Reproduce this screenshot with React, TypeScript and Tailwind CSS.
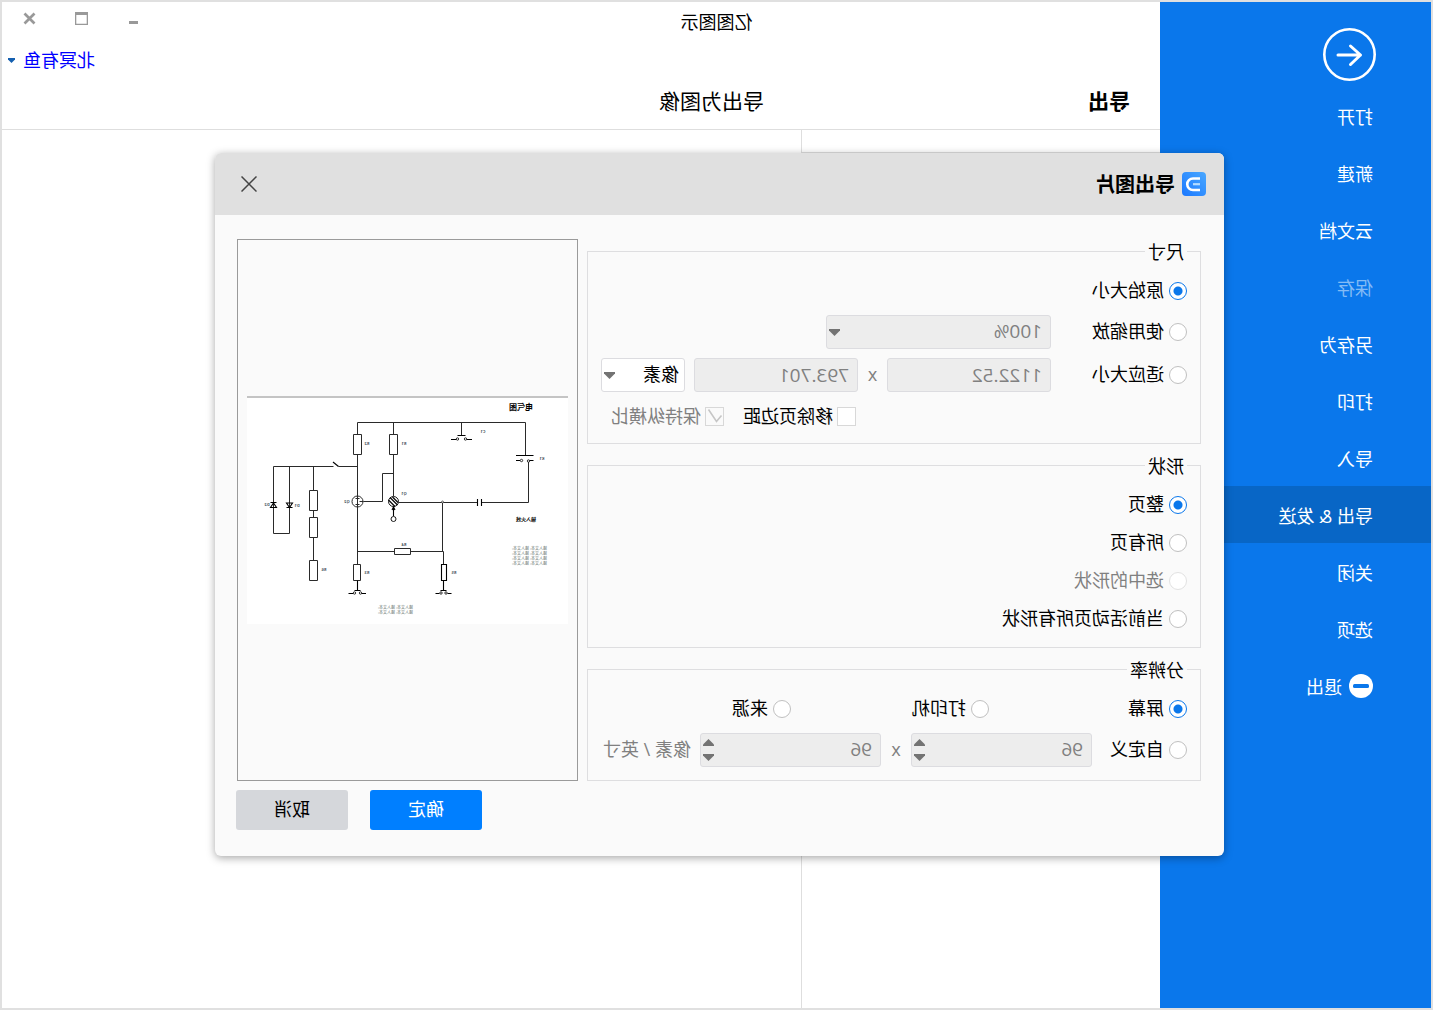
import React, { useState } from "react";
import type { ReactNode } from "react";

const NAV: { label: string; disabled?: boolean; active?: boolean }[] = [
  { label: "打开" },
  { label: "新建" },
  { label: "云文档" },
  { label: "保存", disabled: true },
  { label: "另存为" },
  { label: "打印" },
  { label: "导入" },
  { label: "导出 & 发送", active: true },
  { label: "关闭" },
  { label: "选项" },
];

function Sidebar() {
  return (
    <aside className="w-[271px] shrink-0 bg-[#0a77eb] pt-[26px] text-white">
      <button type="button" aria-label="返回" className="ml-[55px] block">
        <svg width="53" height="53" viewBox="0 0 53 53" fill="none" stroke="#fff">
          <circle cx="26.5" cy="26.5" r="25.2" strokeWidth="2.6" />
          <path d="M38 27H15.500M25.500 18L15.500 27l10 9.500" strokeWidth="3" strokeLinecap="round" strokeLinejoin="round" />
        </svg>
      </button>
      <nav className="mt-1.5">
        {NAV.map((n) => (
          <a
            key={n.label}
            href="#"
            className={
              "flex h-[57px] items-center pt-0.5 pl-[58px] leading-6 " +
              (n.active ? "bg-[#0866c6] " : "") +
              (n.disabled ? "text-[#84bbf5]" : "")
            }
          >
            {n.label}
          </a>
        ))}
        <a href="#" className="flex h-[57px] items-center gap-[7px] pl-[58px] leading-6">
          <svg width="24" height="24" viewBox="0 0 24 24">
            <circle cx="12" cy="12" r="12" fill="#fff" />
            <rect x="4" y="10" width="16" height="4" rx="1.500" fill="#0a77eb" />
          </svg>
          <span className="pt-0.5">退出</span>
        </a>
      </nav>
    </aside>
  );
}

function Header() {
  return (
    <header className="border-b border-[#dedede]">
      <div className="flex h-[42px] items-start">
        <h1 className="w-[calc(100%-271px)] pt-2 text-center leading-6">亿图图示</h1>
        <div className="ml-auto flex pr-0.5">
          <button type="button" aria-label="最小化" className="flex h-[33px] w-[52px] items-center justify-center">
            <svg width="13" height="13" viewBox="0 0 13 13"><path d="M2 9h9v3H2z" fill="#999" /></svg>
          </button>
          <button type="button" aria-label="最大化" className="flex h-[33px] w-[52px] items-center justify-center">
            <svg width="13" height="13" viewBox="0 0 13 13"><path d="M0 0h13v13H0zM1.300 3v8.700h10.400V3z" fill="#999" fillRule="evenodd" /></svg>
          </button>
          <button type="button" aria-label="关闭窗口" className="flex h-[33px] w-[52px] items-center justify-center">
            <svg width="13" height="13" viewBox="0 0 13 13"><path d="M1.500 1.500l10 10M11.500 1.500l-10 10" stroke="#999" strokeWidth="2.700" /></svg>
          </button>
        </div>
      </div>
      <div className="flex h-8 justify-end pr-1.5">
        <button type="button" className="flex items-center gap-2 text-[#0000ff]">
          北冥有鱼
          <svg width="7" height="5" viewBox="0 0 7 5"><path d="M0 0h7v1.500L3.500 5 0 1.500z" fill="#1560b0" /></svg>
        </button>
      </div>
      <div className="flex h-[53px] items-center pb-1 text-[21px] leading-7">
        <h2 className="w-[359px] shrink-0 pl-[30px] font-bold">导出</h2>
        <h3 className="pl-[37px]">导出为图像</h3>
      </div>
    </header>
  );
}

function Radio({ name, label, checked, disabled, onPick, className = "" }: {
  name: string; label: string; checked: boolean; disabled?: boolean; onPick: () => void; className?: string;
}) {
  return (
    <label className={"flex h-6 shrink-0 items-center gap-[5px] " + (disabled ? "text-[#808080] " : "") + className}>
      <input
        type="radio"
        name={name}
        checked={checked}
        disabled={disabled}
        onChange={onPick}
        className="size-[18px] shrink-0 appearance-none rounded-full border border-[#c0c0c0] bg-white checked:border-[#0a77eb] checked:bg-[radial-gradient(circle,#0a77eb_4px,#ffffff_5px)] disabled:border-[#e2e2e2]"
      />
      {label}
    </label>
  );
}

function Group({ title, className, children }: { title: string; className: string; children: ReactNode }) {
  return (
    <fieldset className={"border border-[#dedee0] px-[13px] " + className}>
      <legend className="px-[3px] leading-[26px]">{title}</legend>
      {children}
    </fieldset>
  );
}

function Caret({ up }: { up?: boolean }) {
  return (
    <svg width="11" height="7" viewBox="0 0 11 7" className="block">
      <path d={up ? "M5.500 0L11 5.500V7H0V5.500z" : "M5.500 7L0 1.500V0h11v1.500z"} fill="#737373" />
    </svg>
  );
}

function Picker({ label, value, disabled, className }: { label: string; value: string; disabled?: boolean; className: string }) {
  return (
    <div className={"relative shrink-0 " + className}>
      <select
        aria-label={label}
        disabled={disabled}
        className={
          "h-[34px] w-full appearance-none rounded-[3px] border border-[#dcdce0] opacity-100 " +
          (disabled ? "bg-[#ededed] pl-2 text-[19px] text-[#808080]" : "bg-white pl-[5px] text-black")
        }
      >
        <option>{value}</option>
      </select>
      <span className="pointer-events-none absolute top-[14px] right-[3px]"><Caret /></span>
    </div>
  );
}

function Field({ label, value }: { label: string; value: string }) {
  return (
    <input
      aria-label={label}
      disabled
      defaultValue={value}
      className="h-[34px] w-[164px] min-w-0 rounded-[3px] border border-[#dcdce0] bg-[#ededed] pl-2 text-[19px] text-[#808080]"
    />
  );
}

function Spin({ label, value }: { label: string; value: string }) {
  return (
    <div className="flex h-[34px] w-[181px] items-center rounded-[3px] border border-[#dcdce0] bg-[#ededed] pr-[2px] pl-2">
      <input aria-label={label} disabled defaultValue={value} className="w-0 flex-1 text-[19px] text-[#808080]" />
      <div className="flex flex-col gap-2">
        <button type="button" aria-label={label + "增加"} disabled><Caret up /></button>
        <button type="button" aria-label={label + "减少"} disabled><Caret /></button>
      </div>
    </div>
  );
}

function Tick({ label, checked, disabled }: { label: string; checked?: boolean; disabled?: boolean }) {
  const [on, setOn] = useState(!!checked);
  return (
    <label className={"flex h-6 items-center gap-1 " + (disabled ? "text-[#808080]" : "")}>
      <span className="relative block size-[19px]">
        <input
          type="checkbox"
          checked={on}
          disabled={disabled}
          onChange={() => setOn(!on)}
          className="block size-[19px] appearance-none border border-[#d8d8d8] bg-white disabled:bg-[#fafafa]"
        />
        {on && (
          <svg width="19" height="19" viewBox="0 0 19 19" className="pointer-events-none absolute inset-0">
            <path d="M2.500 8.500l5 6L15.500 2.500" fill="none" stroke="#c6c6c6" strokeWidth="1.600" />
          </svg>
        )}
      </span>
      {label}
    </label>
  );
}

function Circuit() {
  const labels: [number, number, string][] = [
    [201, 47, "R2"], [164, 47, "R1"], [85, 35, "C1"], [26, 62, "K1"], [164, 97, "Q1"], [221, 105, "Q2"],
    [164, 148, "R4"], [201, 176, "R3"], [114, 176, "R5"], [301, 108, "D2"], [271, 109, "D1"], [244, 173, "R6"],
  ];
  const notes: [number, number][] = [[21, 154], [21, 159], [21, 164], [21, 169], [155, 213], [155, 218]];
  return (
    <svg width="321" height="228" viewBox="0 0 321 228" role="img" aria-label="电路图预览">
      <rect width="321" height="228" fill="#fff" />
      <rect width="321" height="2" fill="#c4c4c4" />
      <g fill="none" stroke="#2a2a2a" strokeWidth="1">
        <path d="M42.500 59.500V26.500H210.500V38.500M174.500 26.500V38.500M106.500 26.500V39.500" />
        <path d="M206.500 38.500h8v20h-8zM170.500 38.500h8v20h-8z" />
        <path d="M210.500 58.500V168.500M174.500 58.500V100M174.500 77.500h11v28h19" />
        <path d="M169 106.500H90.500M86.500 106.500H39.500V64.500" />
        <path d="M125.500 106.500V155.500M210.500 155.500H173.500M157.500 155.500H124.500V168.500" />
        <path d="M157.500 152.500h16v6h-16z" fill="#fff" />
        <path d="M207.500 168.500h7v16h-7z" fill="#fff" />
        <path d="M210.500 70.500H229.500M234.500 70.500H294.500V137.500H278.500V70.500M254.500 70.500V94.500M254.500 114.500V121.500M254.500 141.500V164.500" />
        <path d="M250.500 94.500h8v20h-8zM250.500 121.500h8v20h-8zM250.500 164.500h8v20h-8z" fill="#fff" />
        <circle cx="210.500" cy="105.500" r="5.500" />
        <path d="M210.500 99v13M212.500 102.500h-4M208.500 105.500h-4M212.500 108.500h-4" />
        <circle cx="125.500" cy="106" r="1" fill="#fff" strokeWidth="0.700" />
      </g>
      <g fill="none" stroke="#000" strokeWidth="1.100">
        <path d="M121.500 168.500h5v16h-5zM124.500 184.500V194.500M210.500 184.500V194.500" />
        <path d="M90.500 103v7M86.500 103v7" />
        <path d="M229.500 70.500l5.500 -4.500" />
        <path d="M102.500 39.500h8M117 43.500h-5M101 43.500h-5" />
        <path d="M34.500 59.500H52M52 64.500h-4M38.500 64.500H34.500" />
        <path d="M121.500 194.500h6M132.500 197.500h-4M120.500 197.500h-4" />
        <path d="M207.500 194.500h6M219.500 197.500h-4.500M206.500 197.500h-4.500" />
        <path d="M291.500 111.500h6l-3 -4.500zM291.500 106.500h6M275.500 107h6l-3 4.500zM275.500 111.500h6" />
        <path d="M174.500 111v9M173 114l1.500 -3 1.500 3" />
        <circle cx="174.500" cy="123" r="2.500" strokeWidth="0.900" />
        <circle cx="174.500" cy="105.500" r="5" strokeWidth="0.900" />
        <path d="M170 106.500l5.500 -5.500M170.500 109l7.500 -7.500M173 110.500l6.500 -6.500" />
      </g>
      <g fill="#fff" stroke="#000" strokeWidth="0.800">
        <circle cx="110.500" cy="43" r="1.200" /><circle cx="102.500" cy="43" r="1.200" />
        <circle cx="46.500" cy="64.500" r="1.200" /><circle cx="39.500" cy="65" r="1.200" />
        <circle cx="127" cy="197" r="1.200" /><circle cx="122" cy="197" r="1.200" />
        <circle cx="213.500" cy="197" r="1.200" /><circle cx="207.500" cy="197" r="1.200" />
      </g>
      <g textAnchor="middle" fontSize="4" fontWeight="bold" fill="#4a5560">
        {labels.map(([x, y, t]) => <text key={t} x={x} y={y + 2}>{t}</text>)}
      </g>
      <text x="35" y="14" fontSize="8" fontWeight="bold">电气图</text>
      <text x="32" y="125" fontSize="5" fontWeight="bold">输入火线</text>
      <g fontSize="4" fill="#5f706b">
        {notes.map(([x, y]) => <text key={x + "-" + y} x={x} y={y}>输入文本: 输入文本:</text>)}
      </g>
    </svg>
  );
}

function ExportDialog() {
  const [size, setSize] = useState("原始大小");
  const [shape, setShape] = useState("整页");
  const [res, setRes] = useState("屏幕");
  return (
    <section role="dialog" aria-label="导出图片" className="w-[1009px] rounded-md bg-[#fafafa] shadow-[0_2px_8px_rgba(0,0,0,0.35)]">
      <div className="flex h-[62px] items-center gap-[7px] rounded-t-md bg-[#e0e0e0] pr-[26px] pl-[18px]">
        <svg width="24" height="24" viewBox="0 0 24 24">
          <defs>
            <linearGradient id="logo" x1="0" y1="0" x2="1" y2="1">
              <stop offset="0" stopColor="#4aa8ff" /><stop offset="1" stopColor="#1a78ff" />
            </linearGradient>
          </defs>
          <rect width="24" height="24" rx="4" fill="url(#logo)" />
          <path d="M6 6.500h7a5.500 5.500 0 0 1 0 11.500H6" fill="none" stroke="#fff" strokeWidth="2.600" />
          <path d="M6 12.200h7" stroke="#b5dcff" strokeWidth="2.200" />
        </svg>
        <h2 className="pt-0.5 text-[20px] leading-6 font-bold">导出图片</h2>
        <button type="button" aria-label="关闭" className="ml-auto">
          <svg width="16" height="16" viewBox="0 0 16 16"><path d="M.5.5l15 15M15.500.5l-15 15" stroke="#444" strokeWidth="1.500" /></svg>
        </button>
      </div>
      <div className="flex gap-[9px] pt-6 pr-[22px] pl-[23px]">
        <div className="flex min-w-0 flex-1 flex-col gap-[9px]">
          <Group title="尺寸" className="pb-[14px]">
            <Radio name="size" label="原始大小" checked={size === "原始大小"} onPick={() => setSize("原始大小")} className="mt-[14px]" />
            <div className="mt-3 flex items-center">
              <Radio name="size" label="使用缩放" checked={size === "使用缩放"} onPick={() => setSize("使用缩放")} className="w-[136px]" />
              <Picker label="缩放比例" value="100%" disabled className="w-[225px]" />
            </div>
            <div className="mt-[9px] flex items-center">
              <Radio name="size" label="适应大小" checked={size === "适应大小"} onPick={() => setSize("适应大小")} className="w-[136px]" />
              <Field label="宽度" value="1122.52" />
              <span className="w-[29px] text-center text-[#808080]">x</span>
              <Field label="高度" value="793.701" />
              <Picker label="单位" value="像素" className="ml-[9px] w-[84px]" />
            </div>
            <div className="mt-[13px] flex justify-end gap-[19px] pr-2.5">
              <Tick label="移除页边距" />
              <Tick label="保持纵横比" checked disabled />
            </div>
          </Group>
          <Group title="形状" className="pb-4">
            <div className="mt-[14px] flex flex-col gap-[14px]">
              {["整页", "所有页", "选中的形状", "当前活动页所有形状"].map((l) => (
                <Radio key={l} name="shape" label={l} disabled={l === "选中的形状"} checked={shape === l} onPick={() => setShape(l)} />
              ))}
            </div>
          </Group>
          <Group title="分辨率" className="pb-[13px]">
            <div className="mt-[14px] flex">
              {["屏幕", "打印机", "来源"].map((l) => (
                <Radio key={l} name="res" label={l} checked={res === l} onPick={() => setRes(l)} className="w-[198px] last:w-auto" />
              ))}
            </div>
            <div className="mt-3 flex items-center text-[#808080]">
              <Radio name="res" label="自定义" checked={res === "自定义"} onPick={() => setRes("自定义")} className="w-[95px] text-black" />
              <Spin label="水平分辨率" value="96" />
              <span className="w-[30px] text-center">x</span>
              <Spin label="垂直分辨率" value="96" />
              <span className="ml-[9px] whitespace-nowrap">像素 / 英寸</span>
            </div>
          </Group>
        </div>
        <div className="flex w-[341px] shrink-0 items-center justify-center border border-[#9a9a9a]">
          <Circuit />
        </div>
      </div>
      <div className="flex justify-end gap-[22px] pt-[9px] pr-[21px] pb-[26px]">
        <button type="button" className="h-10 w-28 rounded-[3px] bg-[#007fff] text-white">确定</button>
        <button type="button" className="h-10 w-28 rounded-[3px] bg-[#d5d7db]">取消</button>
      </div>
    </section>
  );
}

export default function App() {
  return (
    <div className="relative flex min-h-screen -scale-x-100 border-2 border-[#e0e0e0] bg-white font-['Open_Sans','Noto_Sans_CJK_SC',sans-serif] text-[18px] text-black">
      <Sidebar />
      <main className="flex min-w-0 flex-1 flex-col">
        <Header />
        <div className="flex flex-1">
          <div className="w-[359px] shrink-0 border-r border-[#dedede]">
            <div className="h-[23px] border-b border-[#dedede]" />
          </div>
          <div className="flex-1" />
        </div>
      </main>
      <div className="absolute inset-0 flex items-center justify-center pr-1.5 pb-0.5">
        <ExportDialog />
      </div>
    </div>
  );
}
